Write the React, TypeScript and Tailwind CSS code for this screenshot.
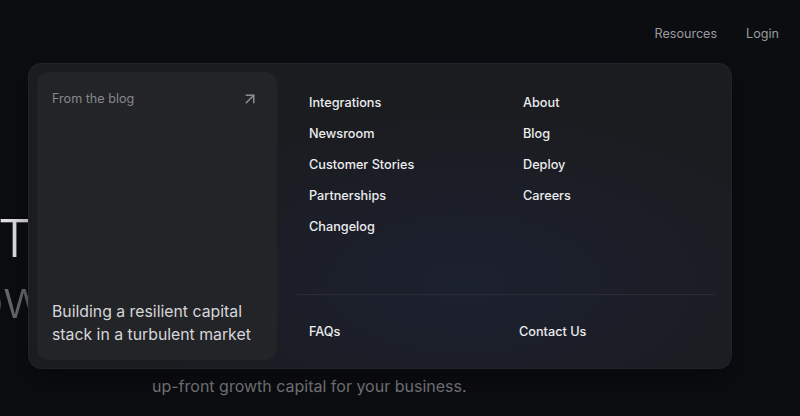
import React from "react";
import { ArrowUpRight } from "lucide-react";

const col1 = ["Integrations", "Newsroom", "Customer Stories", "Partnerships", "Changelog"];
const col2 = ["About", "Blog", "Deploy", "Careers"];

export default function App() {
  return (
    <div
      className="relative w-full h-[416px] overflow-hidden bg-[#0c0d11]"
      style={{ fontFamily: "Inter, 'Noto Sans', sans-serif" }}
    >
      {/* header */}
      <header className="h-[69px] flex items-center justify-end gap-[29px] pr-[21px] text-[12.6px] text-[#9a9b9f]">
        <span>Resources</span>
        <span>Login</span>
      </header>

      {/* hero behind the dropdown */}
      <div className="mt-[139px]">
        <div className="-ml-[2px] text-[52px] leading-[61px] font-light text-[#e4e4e6] whitespace-nowrap">
          T
        </div>
        <div className="w-[45px] overflow-hidden flex justify-end text-[52px] leading-[61px] font-light text-[#68696d] whitespace-nowrap">
          <span>Grow</span>
        </div>
        <p className="mt-[44px] ml-[152px] text-[16px] leading-[24px] text-[#7a7b7f] whitespace-nowrap">
          up-front growth capital for your business.
        </p>
      </div>

      {/* dropdown panel */}
      <div className="absolute left-[28px] top-[63px] w-[704px] h-[306px] rounded-[14px] border border-white/[0.03] bg-[radial-gradient(ellipse_at_62%_72%,#1c2130_0%,#1b1c20_55%)] p-[8px] flex shadow-[0_10px_30px_rgba(0,0,0,0.4)]">
        <div className="w-[240px] h-full rounded-[12px] bg-[#232428] flex flex-col justify-between pl-[15px] pr-[15px] pt-[18px] pb-[14px]">
          <div className="flex items-center justify-between pr-[3px] h-[18px] text-[12.6px] leading-[18px] text-[#86878b]">
            <span>From the blog</span>
            <ArrowUpRight size={18} strokeWidth={2} className="text-[#8e8f93]" />
          </div>
          <p className="text-[15.8px] leading-[23px] text-[#d6d6d8]">
            Building a resilient capital
            <br />
            stack in a turbulent market
          </p>
        </div>

        <div className="flex-1 flex flex-col pl-[20px] pr-[8px]">
          <div className="flex-1 pt-[22px] pl-[12px] flex text-[12.7px] leading-[18px] font-medium text-[#ececee]">
            <ul className="w-[214px] flex flex-col gap-[13px]">
              {col1.map((l) => (
                <li key={l}>{l}</li>
              ))}
            </ul>
            <ul className="flex flex-col gap-[13px]">
              {col2.map((l) => (
                <li key={l}>{l}</li>
              ))}
            </ul>
          </div>
          <div className="h-px bg-[#2b2c31]" />
          <div className="h-[65px] pt-[8px] flex items-center pl-[12px] text-[12.7px] leading-[18px] font-medium text-[#ececee]">
            <span className="w-[210px]">FAQs</span>
            <span>Contact Us</span>
          </div>
        </div>
      </div>
    </div>
  );
}
